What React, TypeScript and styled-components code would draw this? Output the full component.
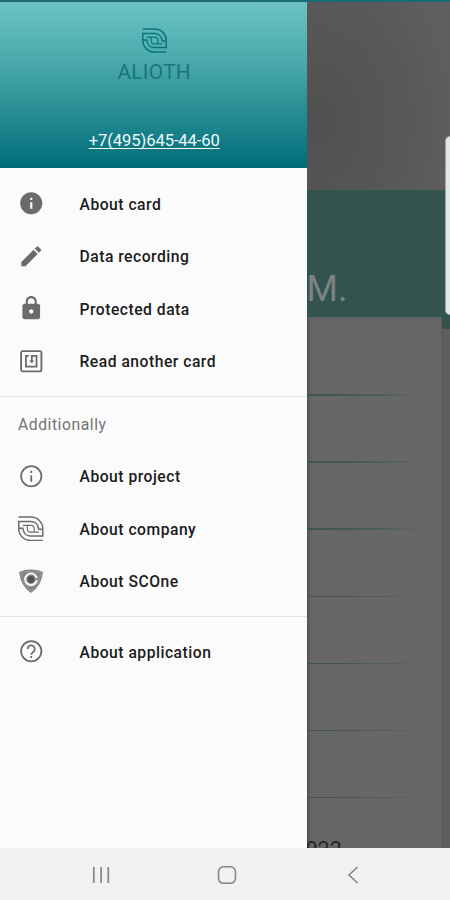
import React from "react";
import styled, { createGlobalStyle } from "styled-components";
import { MdInfo, MdEdit, MdLock } from "react-icons/md";

const GlobalStyle = createGlobalStyle`
  * { box-sizing: border-box; }
  body { margin: 0; font-family: Roboto, sans-serif; background: #f1f1f1; }
`;

const Screen = styled.div`
  width: 450px;
  height: 900px;
  display: flex;
  flex-direction: column;
  overflow: hidden;
`;

const StatusBar = styled.div`
  height: 2px;
  flex: none;
  background: #1c6a73;
`;

const Main = styled.main`
  height: 846px;
  display: flex;
  position: relative;
`;

const Drawer = styled.aside`
  width: 306.5px;
  flex: none;
  background: #fbfbfb;
`;

const DrawerHeader = styled.header`
  height: 165.5px;
  padding: 26px 0 0 2px;
  display: flex;
  flex-direction: column;
  align-items: center;
  background: linear-gradient(#6cc2c3 0%, #4faeb0 30%, #35979c 55%, #1b838b 76%, #07727e 94%, #006a77 100%);
  color: #0c7580;
`;

const Wordmark = styled.div`
  margin-top: 6.5px;
  font-size: 20.8px;
  line-height: 25px;
  letter-spacing: 0.3px;
  color: #17767f;
`;

const Phone = styled.a`
  margin-top: 46px;
  font-size: 16.6px;
  line-height: 20px;
  letter-spacing: -0.1px;
  color: #f0fafa;
  text-decoration: underline;
  text-decoration-thickness: 1px;
  text-underline-offset: 2px;
  text-decoration-skip-ink: none;
`;

const Group = styled.nav<{ $top: number; $bottom: number }>`
  padding: ${(p) => p.$top}px 0 ${(p) => p.$bottom}px;
  & + & { border-top: 1px solid #e2e2e2; }
`;

const Item = styled.div`
  height: 52.5px;
  padding-left: 18px;
  display: flex;
  align-items: center;
  font-size: 15.7px;
  font-weight: 500;
  letter-spacing: 0.49px;
  color: #1c1c1c;
`;

const IconSlot = styled.span`
  width: 61.5px;
  margin-top: -2px;
  display: flex;
  color: #6b6b6b;
`;

const GroupTitle = styled.div`
  height: 44.5px;
  padding: 0 18px;
  line-height: 37px;
  font-size: 15.7px;
  letter-spacing: 0.55px;
  color: #747474;
`;

const Backdrop = styled.section`
  flex: 1;
  min-width: 0;
  display: flex;
  flex-direction: column;
  overflow: hidden;
  background: #5d5d5d;
`;

const Photo = styled.div`
  height: 188px;
  flex: none;
  background: radial-gradient(ellipse 150px 200px at 10px 120px, #505050, #595959 65%, #606060 100%);
`;

const Banner = styled.div`
  height: 127px;
  flex: none;
  padding: 79px 0 0 0;
  font-size: 36px;
  line-height: 40px;
  color: #7b8383;
  background: #33534f;
`;

const Lower = styled.div`
  flex: 1;
  display: flex;
  min-height: 0;
`;

const Sheet = styled.div`
  width: 135.5px;
  overflow: hidden;
  background: #676767;
  border-right: 1px solid #5b5b5b;
  box-shadow: inset 4px 0 4px -3px #484848;
`;

const Field = styled.div<{ $first?: boolean }>`
  height: ${(p) => (p.$first ? 78.8 : 67.1)}px;
  display: flex;
  align-items: flex-end;
  &::after {
    content: "";
    width: 117px;
    height: 1.5px;
    background: linear-gradient(90deg, #3c5253, #4c5d5e 60%, #676767);
  }
`;

const Year = styled.div`
  margin: 38.5px 0 0 -1px;
  font-size: 21.5px;
  line-height: 25px;
  color: #262626;
`;

const Gutter = styled.div`
  flex: 1;
  background: linear-gradient(#33534f 12px, #5e5e5e 12px);
`;

const EdgeHandle = styled.div`
  position: absolute;
  right: 0;
  top: 134px;
  width: 5px;
  height: 179px;
  border-radius: 5px 0 0 5px;
  border: 1px solid #9da7a6;
  border-right: 0;
  background: #e4e7e7;
`;

const NavBar = styled.footer`
  height: 52px;
  display: flex;
  align-items: center;
  padding: 2px 34px 0 38px;
  background: #f1f1f1;
  color: #858585;
`;

const NavButton = styled.div`
  flex: 1;
  height: 24px;
  display: flex;
  justify-content: center;
`;

function AliothMark({ size, weight = 1.5 }: { size: number; weight?: number }) {
  const sweep = "M0.5 1H12C18.5 1 23.3 6 23.4 12";
  return (
    <svg width={size} height={size} viewBox="0 0 24 24" fill="none" stroke="currentColor" strokeWidth={weight}>
      <path d={sweep} />
      <path d={sweep} transform="rotate(180 12 12)" />
      <path d="M0.7 5.2H12C16 5.2 19 8 19.4 12.5H23.3V18.8H12C8 18.8 5 16 4.6 11.5H0.7Z" />
      <path d="M4.6 8.8H12A3.2 3.2 0 0 1 15.2 12V15.2H12A3.2 3.2 0 0 1 8.8 12V8.8M15.2 15.2H19.5" strokeWidth={weight * 0.75} />
    </svg>
  );
}

function NfcMark() {
  return (
    <svg width="26.5" height="26.5" viewBox="0 0 24 24" fill="none" stroke="currentColor">
      <rect x="2.8" y="2.8" width="18.4" height="18.4" rx="1.7" strokeWidth="1.7" />
      <path d="M9.8 7.2H7.2V16.8H16.8V7.2H12.5V12" strokeWidth="1.6" />
      <path d="M10.2 11.4H14.8L12.5 13.9Z" fill="currentColor" stroke="none" />
    </svg>
  );
}

function InfoRing() {
  return (
    <svg width="26.5" height="26.5" viewBox="0 0 24 24" fill="none" stroke="currentColor" strokeWidth="1.6">
      <circle cx="12" cy="12" r="9.2" />
      <path d="M12 11V17M12 7V9" />
    </svg>
  );
}

function HelpRing() {
  return (
    <svg width="26.5" height="26.5" viewBox="0 0 24 24" fill="none" stroke="currentColor" strokeWidth="1.6">
      <circle cx="12" cy="12" r="9.2" />
      <path d="M8.8 10A3.2 3.2 0 1 1 14.3 12.2C13 13.3 12 13.7 12 15.2M12 16.3V18" />
    </svg>
  );
}

function ShieldMark() {
  return (
    <svg width="26" height="26" viewBox="0 0 26 26" fill="none">
      <path d="M1 4Q13-.8 25 4Q23.5 18 13 25Q2.5 18 1 4Z" fill="#858585" />
      <path d="M3 5.3Q13 1.2 23 5.3Q21.3 17 13 22.8Q4.7 17 3 5.3Z" stroke="#a0a0a0" strokeWidth=".7" />
      <circle cx="13" cy="11.3" r="5.8" fill="#858585" stroke="#f3f3f3" strokeWidth="2.2" />
      <path d="M17.3 10.2H20.5V12.2H17.3Z" fill="#858585" />
      <circle cx="13" cy="11.3" r="3.6" fill="#555" />
    </svg>
  );
}

const cardItems = [
  { label: "About card", icon: <MdInfo size={26.5} /> },
  { label: "Data recording", icon: <MdEdit size={26.5} /> },
  { label: "Protected data", icon: <MdLock size={26.5} /> },
  { label: "Read another card", icon: <NfcMark /> },
];

const moreItems = [
  { label: "About project", icon: <InfoRing /> },
  { label: "About company", icon: <AliothMark size={25.5} weight={1.4} /> },
  { label: "About SCOne", icon: <ShieldMark /> },
];

const appItems = [{ label: "About application", icon: <HelpRing /> }];

function Items({ items }: { items: { label: string; icon: React.ReactNode }[] }) {
  return (
    <>
      {items.map((item) => (
        <Item key={item.label}>
          <IconSlot>{item.icon}</IconSlot>
          {item.label}
        </Item>
      ))}
    </>
  );
}

export default function App() {
  return (
    <Screen>
      <GlobalStyle />
      <StatusBar />
      <Main>
        <Drawer>
          <DrawerHeader>
            <AliothMark size={25} />
            <Wordmark>ALIOTH</Wordmark>
            <Phone>+7(495)645-44-60</Phone>
          </DrawerHeader>
          <Group $top={10.5} $bottom={7.5}>
            <Items items={cardItems} />
          </Group>
          <Group $top={9.5} $bottom={7.5}>
            <GroupTitle>Additionally</GroupTitle>
            <Items items={moreItems} />
          </Group>
          <Group $top={9.5} $bottom={0}>
            <Items items={appItems} />
          </Group>
        </Drawer>
        <Backdrop>
          <Photo />
          <Banner>M.</Banner>
          <Lower>
            <Sheet>
              <Field $first />
              <Field />
              <Field />
              <Field />
              <Field />
              <Field />
              <Field />
              <Year>022</Year>
            </Sheet>
            <Gutter />
          </Lower>
        </Backdrop>
        <EdgeHandle />
      </Main>
      <NavBar>
        <NavButton>
          <svg width="24" height="24" viewBox="0 0 24 24" stroke="currentColor" strokeWidth="1.7">
            <path d="M4.8 4V20M12.1 4V20M19.3 4V20" />
          </svg>
        </NavButton>
        <NavButton>
          <svg width="24" height="24" viewBox="0 0 24 24" fill="none" stroke="currentColor" strokeWidth="1.6">
            <rect x="3.5" y="3.8" width="17" height="16.5" rx="5" />
          </svg>
        </NavButton>
        <NavButton>
          <svg width="24" height="24" viewBox="0 0 24 24" fill="none" stroke="currentColor" strokeWidth="1.6">
            <path d="M16.5 4L8 12L16.5 20" />
          </svg>
        </NavButton>
      </NavBar>
    </Screen>
  );
}
